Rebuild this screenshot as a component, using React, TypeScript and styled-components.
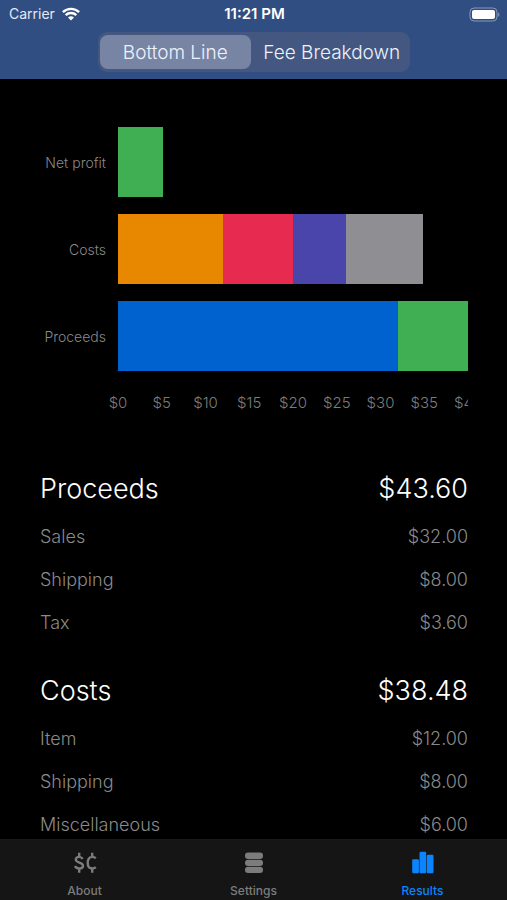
import React, { useState } from 'react';
import styled, { createGlobalStyle } from 'styled-components';

const GlobalStyle = createGlobalStyle`
  * { box-sizing: border-box; }
  body {
    margin: 0;
    background: #000;
    color: #fff;
    font-family: Inter, sans-serif;
  }
`;

const Screen = styled.div`
  height: 100vh;
  display: flex;
  flex-direction: column;
  overflow: hidden;
`;

const Header = styled.header`
  flex: none;
  background: #304e82;
  padding-bottom: 7px;
`;

const StatusBar = styled.div`
  display: grid;
  grid-template-columns: 1fr auto 1fr;
  align-items: center;
  height: 28px;
  padding: 0 7px 0 9px;
  margin-bottom: 4px;
  font-size: 14px;
  line-height: 18px;
`;

const StatusSide = styled.div<{ $end?: boolean }>`
  display: flex;
  align-items: center;
  gap: 7px;
  justify-content: ${(p) => (p.$end ? 'flex-end' : 'flex-start')};
  color: #e4e9f2;
`;

const Clock = styled.time`
  font-size: 15px;
  font-weight: 600;
`;

const Segmented = styled.div`
  display: grid;
  grid-template-columns: 1fr 1fr;
  column-gap: 5px;
  width: 312px;
  max-width: 90%;
  height: 40px;
  margin: 0 auto;
  padding: 3px 2px;
  border-radius: 9px;
  background: #435781;
`;

const Segment = styled.button<{ $active: boolean }>`
  border: 0;
  border-radius: 8px;
  padding: 2px 0 0;
  background: ${(p) => (p.$active ? '#7884a4' : 'transparent')};
  color: #eef2fa;
  font: 300 19px/24px Inter, sans-serif;
  white-space: nowrap;
`;

const Content = styled.main`
  flex: 1;
  min-height: 0;
  overflow: hidden;
  padding: 48px 39px 0 40px;
`;

const Chart = styled.section`
  display: flex;
  flex-direction: column;
  gap: 17px;
  overflow: hidden;
`;

const ChartRow = styled.div`
  display: grid;
  grid-template-columns: 66px 1fr;
  column-gap: 12px;
  align-items: center;
`;

const ChartLabel = styled.span`
  justify-self: end;
  padding-top: 2px;
  color: #8a8a8a;
  font: 300 14px/20px Inter, sans-serif;
  white-space: nowrap;
`;

const Track = styled.div`
  display: flex;
  height: 70px;
`;

const Bar = styled.div`
  flex: none;
`;

const Axis = styled.div`
  display: flex;
  margin: 5px 0 0 78px;
`;

const Tick = styled.span`
  flex: 0 0 12.5%;
  text-align: center;
  color: #7c7c7c;
  font: 300 15px/20px Inter, sans-serif;

  &:first-child { margin-left: -6.25%; }
`;

const Group = styled.table`
  width: 100%;
  border-collapse: collapse;
  color: #8a8a8a;
  margin-top: 50px;

  & + & { margin-top: 21px; }
  th, td { padding: 0; font-weight: 300; text-align: left; }
  td { text-align: right; }
`;

const TotalRow = styled.tr`
  height: 52px;
  color: #fff;
  font-size: 27px;
  line-height: 36px;
`;

const ItemRow = styled.tr`
  height: 43px;
  font-size: 18px;
  line-height: 24px;
`;

const TabBar = styled.nav`
  flex: none;
  display: grid;
  grid-template-columns: repeat(3, 1fr);
  height: 61px;
  background: #151515;
  border-top: 1px solid #191919;
`;

const Tab = styled.a<{ $active?: boolean }>`
  display: flex;
  flex-direction: column;
  align-items: center;
  gap: 8px;
  padding-top: 11px;
  color: ${(p) => (p.$active ? '#0a84ff' : '#7c7c7c')};
  font-size: 12px;
  line-height: 16px;
  font-weight: 500;
  text-decoration: none;
`;

const WifiIcon = () => (
  <svg width="18" height="14" viewBox="0 0 18 14" fill="none" stroke="#fff" strokeWidth="2.4" aria-hidden="true">
    <path d="M.9 5.2a11.6 11.6 0 0 1 16.2 0M3.7 8.2a7.6 7.6 0 0 1 10.6 0" />
    <path d="M9 13.6 6 10.6a4.3 4.3 0 0 1 6 0z" fill="#fff" stroke="none" />
  </svg>
);

const BatteryIcon = () => (
  <svg width="31" height="15" viewBox="0 0 31 15" aria-hidden="true">
    <rect x="1" y="1" width="27" height="13" rx="4" fill="none" stroke="#8998b7" />
    <rect x="3" y="3" width="23" height="9" rx="2" fill="#fff" />
    <path d="M29.2 5.2c1.7.8 1.7 3.8 0 4.6z" fill="#8998b7" />
  </svg>
);

const MoneyIcon = () => (
  <svg width="24" height="24" viewBox="0 0 24 24" fill="none" stroke="currentColor" strokeWidth="2.4" aria-hidden="true">
    <path d="M9.600 8C8.800 6.500 7.500 5.900 6 5.900c-1.900 0-3.200 1-3.200 2.600 0 3.600 7.200 2.500 7.200 6.200 0 1.800-1.500 2.800-3.700 2.800-2 0-3.500-.8-4.300-2.400M6.200 1.800v4.200M6.200 17.400v4.300" />
    <path d="M22.800 7.200C21.700 6.300 20.600 5.900 19.400 5.900c-3 0-4.700 2.300-4.700 5.800s1.700 5.800 4.700 5.800c1.300 0 2.400-.4 3.400-1.300M19.200 1.800v4.200M19.200 17.400v4.300" />
  </svg>
);

const StackIcon = () => (
  <svg width="24" height="24" viewBox="0 0 24 24" fill="currentColor" aria-hidden="true">
    <rect x="3" y="1.600" width="18" height="6.300" rx="3" />
    <rect x="3" y="8.700" width="18" height="6.300" rx="3" />
    <rect x="3" y="15.800" width="18" height="6.300" rx="3" />
  </svg>
);

const BarsIcon = () => (
  <svg width="24" height="24" viewBox="0 0 24 24" fill="currentColor" aria-hidden="true">
    <rect x="1.200" y="8.200" width="6.700" height="14" rx="1.200" />
    <rect x="8.500" y="0.800" width="6.700" height="21.400" rx="1.200" />
    <rect x="15.800" y="3.700" width="6.700" height="18.500" rx="1.200" />
  </svg>
);

const scaleMax = 40;

const series = [
  { label: 'Net profit', parts: [{ value: 5.12, color: '#40af53' }] },
  {
    label: 'Costs',
    parts: [
      { value: 12, color: '#e88700' },
      { value: 8, color: '#e72a4f' },
      { value: 6, color: '#4945ab' },
      { value: 8.88, color: '#8f8e93' },
    ],
  },
  {
    label: 'Proceeds',
    parts: [
      { value: 32, color: '#0062cf' },
      { value: 8, color: '#40af53' },
    ],
  },
];

const ticks = ['$0', '$5', '$10', '$15', '$20', '$25', '$30', '$35', '$40'];

const groups = [
  { name: 'Proceeds', total: '$43.60', items: [['Sales', '$32.00'], ['Shipping', '$8.00'], ['Tax', '$3.60']] },
  { name: 'Costs', total: '$38.48', items: [['Item', '$12.00'], ['Shipping', '$8.00'], ['Miscellaneous', '$6.00']] },
];

const segments = ['Bottom Line', 'Fee Breakdown'];

export default function App() {
  const [selected, setSelected] = useState(0);
  return (
    <Screen>
      <GlobalStyle />
      <Header>
        <StatusBar>
          <StatusSide>Carrier <WifiIcon /></StatusSide>
          <Clock>11:21 PM</Clock>
          <StatusSide $end><BatteryIcon /></StatusSide>
        </StatusBar>
        <Segmented>
          {segments.map((name, i) => (
            <Segment key={name} type="button" $active={selected === i} aria-pressed={selected === i} onClick={() => setSelected(i)}>
              {name}
            </Segment>
          ))}
        </Segmented>
      </Header>
      <Content>
        <Chart>
          {series.map((row) => (
            <ChartRow key={row.label}>
              <ChartLabel>{row.label}</ChartLabel>
              <Track>
                {row.parts.map((part) => (
                  <Bar key={part.color} style={{ width: `${(part.value / scaleMax) * 100}%`, background: part.color }} />
                ))}
              </Track>
            </ChartRow>
          ))}
          <Axis>
            {ticks.map((t) => <Tick key={t}>{t}</Tick>)}
          </Axis>
        </Chart>
        {groups.map((g) => (
          <Group key={g.name}>
            <thead>
              <TotalRow><th scope="col">{g.name}</th><td>{g.total}</td></TotalRow>
            </thead>
            <tbody>
              {g.items.map(([name, amount]) => (
                <ItemRow key={name}><th scope="row">{name}</th><td>{amount}</td></ItemRow>
              ))}
            </tbody>
          </Group>
        ))}
      </Content>
      <TabBar>
        <Tab href="#about"><MoneyIcon />About</Tab>
        <Tab href="#settings"><StackIcon />Settings</Tab>
        <Tab href="#results" $active aria-current="page"><BarsIcon />Results</Tab>
      </TabBar>
    </Screen>
  );
}
